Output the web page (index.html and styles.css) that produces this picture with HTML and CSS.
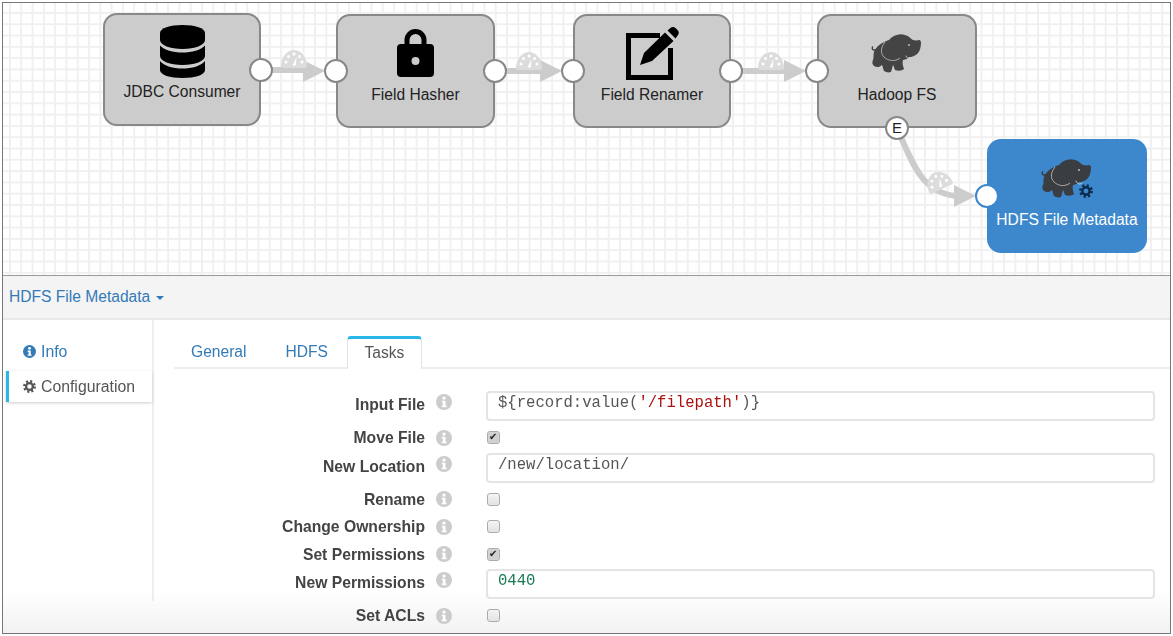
FILE: index.html
```html
<!DOCTYPE html>
<html lang="en">
<head>
<meta charset="utf-8">
<title>HDFS File Metadata</title>
<link rel="stylesheet" href="styles.css">
</head>
<body>
<svg class="defs" xmlns="http://www.w3.org/2000/svg">
  <symbol id="elephant" viewBox="13 9 50 38" overflow="visible">
    <path fill="currentColor" d="M30 15C34 10 41 8 46 10C50 11 52 14 54 15C57 16 59 15 61 15L62 17C62 24 60 29 55 31C53 32 51 32 50 32L48 34L44 35C43 38 44 41 45 44C43 46 39 46 36 45C35 43 35 41 34 40L32 47C29 48 27 47 25 46C24 44 24 42 23 40C21 42 18 43 15 41C13 39 13 37 14 35C15 33 14 30 15 27C17 21 24 17 30 15Z"/>
    <path fill="none" stroke="currentColor" stroke-width="1.400" stroke-linecap="round" d="M18 24C15 26 12.500 25 13.500 22"/>
    <path fill="none" stroke="#a8a8a8" stroke-width="1" d="M26 17C22 22 21 28 25 32C29 36 36 37 41 33"/>
    <path fill="none" stroke="#cfcfcf" stroke-width="1" stroke-linecap="round" d="M47 31C48 34 51 35 53 33"/>
    <circle cx="50" cy="20" r="1" fill="#bdbdbd"/>
  </symbol>
  <symbol id="gauge" viewBox="0 0 26 19">
    <path fill="#dcdcdc" d="M0 17C0 8 6 1 13 1S26 8 26 17C26 18 25 19 24 19H2C1 19 0 18 0 17Z"/>
    <g fill="#fff">
      <circle cx="5" cy="13" r="1.500"/><circle cx="7.500" cy="7.500" r="1.500"/><circle cx="13" cy="5" r="1.500"/><circle cx="18.500" cy="7.500" r="1.500"/><circle cx="21" cy="13" r="1.500"/>
      <path d="M15.500 8L14.800 16.500H11.500Z"/>
    </g>
  </symbol>
  <symbol id="info" viewBox="0 0 16 16">
    <circle cx="8" cy="8" r="8" fill="currentColor"/>
    <circle cx="8" cy="4.100" r="1.700" fill="#fff"/>
    <path fill="#fff" d="M5.800 6.800H9.500V11.600H10.500V13.300H5.800V11.600H6.900V8.500H5.800Z"/>
  </symbol>
  <symbol id="gear" viewBox="0 0 16 16">
    <circle cx="8" cy="8" r="4.200" fill="none" stroke="currentColor" stroke-width="2.800"/>
    <circle cx="8" cy="8" r="6.500" fill="none" stroke="currentColor" stroke-width="2.800" stroke-dasharray="2.550 2.550"/>
  </symbol>
</svg>

<div class="frame">
  <section class="canvas">
    <svg class="links" viewBox="3 3 1167 272" xmlns="http://www.w3.org/2000/svg">
      <g class="link">
        <path d="M262 70H305"/>
        <path d="M495 71H542"/>
        <path d="M731 71H786"/>
        <path d="M900 135C915 170 925 193 956 196"/>
      </g>
      <g class="arrow">
        <path d="M303 60L325 71L303 82Z"/>
        <path d="M540 60L562 71L540 82Z"/>
        <path d="M784 60L806 71L784 82Z"/>
        <path d="M954 185L976 196L954 207Z"/>
      </g>
      <use href="#gauge" x="281" y="49" width="26" height="19"/>
      <use href="#gauge" x="516" y="51" width="26" height="19"/>
      <use href="#gauge" x="758" y="51" width="26" height="19"/>
      <use href="#gauge" x="925" y="171" width="26" height="19" transform="rotate(-25 938 181)"/>
    </svg>

    <div class="node node-jdbc">
      <div class="node-icon">
        <svg width="45" height="53" viewBox="0 0 45 53" xmlns="http://www.w3.org/2000/svg">
          <path d="M0 8C0 3 10 0 22.500 0S45 3 45 8V15C45 20 35 24 22.500 24S0 20 0 15Z"/>
          <path d="M0 20.500C4 25 13 27.500 22.500 27.500S41 25 45 20.500V31C45 36 35 40 22.500 40S0 36 0 31Z"/>
          <path d="M0 36C4 41 13 43.500 22.500 43.500S41 41 45 36V45C45 50 35 53 22.500 53S0 50 0 45Z"/>
        </svg>
      </div>
      <div class="node-label">JDBC Consumer</div>
      <span class="port port-out"></span>
    </div>

    <div class="node node-hasher">
      <div class="node-icon">
        <svg width="37" height="48" viewBox="0 0 37 48" xmlns="http://www.w3.org/2000/svg">
          <path fill="none" stroke="#000" stroke-width="5" d="M10 17V11a8.500 8.500 0 0 1 17 0V17"/>
          <rect y="15" width="37" height="33" rx="4"/>
          <circle cx="18.500" cy="32" r="4" fill="#ccc"/>
        </svg>
      </div>
      <div class="node-label">Field Hasher</div>
      <span class="port port-in"></span>
      <span class="port port-out"></span>
    </div>

    <div class="node node-renamer">
      <div class="node-icon">
        <svg width="53" height="53" viewBox="0 0 53 53" xmlns="http://www.w3.org/2000/svg">
          <path fill="none" stroke="#000" stroke-width="5" d="M34 8.500H2.500V50.500H44.500V21"/>
          <path d="M14 38L18 26L39 5.500L47.500 14L26 34ZM41.500 3.500L45 .5C46.500-.3 48-.3 49.500 1L52 3.500C53 5 53 6.500 52 8L49.500 11.500Z"/>
        </svg>
      </div>
      <div class="node-label">Field Renamer</div>
      <span class="port port-in"></span>
      <span class="port port-out"></span>
    </div>

    <div class="node node-hadoop">
      <div class="node-icon">
        <svg class="elephant" width="50" height="38" xmlns="http://www.w3.org/2000/svg"><use href="#elephant" width="50" height="38"/></svg>
      </div>
      <div class="node-label">Hadoop FS</div>
      <span class="port port-in"></span>
      <span class="port port-event">E</span>
    </div>

    <div class="node node-meta">
      <div class="node-icon">
        <svg class="elephant" width="50" height="38" xmlns="http://www.w3.org/2000/svg">
          <use href="#elephant" width="50" height="38"/>
          <use class="meta-gear" href="#gear" x="37" y="25" width="14" height="14"/>
        </svg>
      </div>
      <div class="node-label">HDFS File Metadata</div>
      <span class="port port-in"></span>
    </div>
  </section>

  <header class="toolbar">
    <a class="crumb">HDFS File Metadata <span class="caret"></span></a>
  </header>

  <main class="main">
    <nav class="side">
      <a class="side-item side-link"><svg class="side-icon"><use href="#info"/></svg>Info</a>
      <a class="side-item side-active"><svg class="side-icon"><use href="#gear"/></svg>Configuration</a>
    </nav>

    <div class="content">
      <ul class="tabs">
        <li class="tab">General</li>
        <li class="tab">HDFS</li>
        <li class="tab tab-active">Tasks</li>
      </ul>

      <form class="form">
        <div class="row row-input">
          <label class="label">Input File</label>
          <svg class="hint"><use href="#info"/></svg>
          <div class="code">${record:value(<span class="str">'/filepath'</span>)}</div>
        </div>
        <div class="row row-check">
          <label class="label">Move File</label>
          <svg class="hint"><use href="#info"/></svg>
          <input class="check" type="checkbox" checked>
        </div>
        <div class="row row-input">
          <label class="label">New Location</label>
          <svg class="hint"><use href="#info"/></svg>
          <div class="code">/new/location/</div>
        </div>
        <div class="row row-check">
          <label class="label">Rename</label>
          <svg class="hint"><use href="#info"/></svg>
          <input class="check" type="checkbox">
        </div>
        <div class="row row-check">
          <label class="label">Change Ownership</label>
          <svg class="hint"><use href="#info"/></svg>
          <input class="check" type="checkbox">
        </div>
        <div class="row row-check">
          <label class="label">Set Permissions</label>
          <svg class="hint"><use href="#info"/></svg>
          <input class="check" type="checkbox" checked>
        </div>
        <div class="row row-input">
          <label class="label">New Permissions</label>
          <svg class="hint"><use href="#info"/></svg>
          <div class="code"><span class="num">0440</span></div>
        </div>
        <div class="row row-check">
          <label class="label">Set ACLs</label>
          <svg class="hint"><use href="#info"/></svg>
          <input class="check" type="checkbox">
        </div>
      </form>
    </div>
  </main>

  <div class="fade"></div>
</div>
</body>
</html>
```

FILE: styles.css
```css
* { box-sizing: border-box; }

html, body {
  margin: 0;
  padding: 0;
  background: #fff;
}

body {
  width: 1173px;
  height: 636px;
  overflow: hidden;
  font-family: "Liberation Sans", Arial, sans-serif;
  color: #333;
}

.defs { display: none; }

.frame {
  position: relative;
  display: flex;
  flex-direction: column;
  width: 1169px;
  height: 632px;
  margin: 2px 0 0 2px;
  border: 1px solid #777;
  overflow: hidden;
  filter: blur(0.35px);
}

/* Pipeline canvas */
.canvas {
  position: relative;
  flex: none;
  height: 273px;
  border-bottom: 1px solid #999;
  background-color: #fff;
  background-image:
    linear-gradient(to right, #f0f0f0 1.5px, transparent 1.5px),
    linear-gradient(to bottom, #f0f0f0 1.5px, transparent 1.5px);
  background-size: 11.3px 11.3px;
  background-position: 6px 9px;
}

.links {
  position: absolute;
  left: 0;
  top: 0;
  width: 1167px;
  height: 272px;
}

.link path {
  fill: none;
  stroke: #ccc;
  stroke-width: 6;
}

.arrow path { fill: #ccc; }

.node {
  position: absolute;
  display: flex;
  flex-direction: column;
  align-items: center;
  height: 114px;
  border: 2px solid #888;
  border-radius: 14px;
  background: #ccc;
  color: #222;
}

.node-jdbc { left: 100px; top: 10px; width: 158px; height: 113px; }
.node-hasher { left: 333px; top: 11px; width: 159px; }
.node-renamer { left: 570px; top: 11px; width: 158px; }
.node-hadoop { left: 814px; top: 11px; width: 160px; }

.node-meta {
  left: 984px;
  top: 136px;
  width: 160px;
  border-color: #3d88cc;
  background: #3d88cc;
  color: #fff;
}

.node-icon {
  display: flex;
  align-items: center;
  justify-content: center;
  height: 70px;
  padding-top: 4px;
}

.node-jdbc .node-icon { height: 68px; }

.node-icon svg { display: block; overflow: visible; }

.elephant { color: #444; }
.node-meta .elephant { color: #3a3d42; }
.meta-gear { color: #0c2c4c; }

.node-label {
  font-size: 15.6px;
  line-height: 18px;
  white-space: nowrap;
}

.port {
  position: absolute;
  top: 43px;
  width: 24px;
  height: 24px;
  border: 2px solid #888;
  border-radius: 50%;
  background: #fff;
}

.port-in { left: -14px; }
.port-out { right: -14px; }
.node-meta .port-in { border-color: #3d88cc; }

.port-event {
  top: auto;
  bottom: -14px;
  left: 50%;
  margin-left: -12px;
  font-size: 15px;
  line-height: 20px;
  text-align: center;
  color: #222;
}

/* Toolbar */
.toolbar {
  flex: none;
  display: flex;
  align-items: center;
  height: 44px;
  padding: 0 6px;
  background: #f4f4f4;
  border-bottom: 2px solid #e9e9e9;
}

.crumb {
  font-size: 15.6px;
  color: #337ab7;
}

.caret {
  display: inline-block;
  width: 0;
  height: 0;
  margin-left: 1px;
  vertical-align: middle;
  border-top: 4px solid #337ab7;
  border-left: 4px solid transparent;
  border-right: 4px solid transparent;
}

/* Main */
.main {
  position: relative;
  z-index: 1;
  flex: 1;
  display: flex;
  align-items: flex-start;
  min-height: 0;
}

.side {
  flex: none;
  display: flex;
  flex-direction: column;
  width: 151px;
  height: 281px;
  padding-top: 16px;
  border-right: 2px solid #eee;
}

.side-item {
  display: flex;
  align-items: center;
  gap: 5px;
  height: 31px;
  font-size: 15.8px;
}

.side-icon {
  flex: none;
  width: 13px;
  height: 13px;
}

.side-link {
  padding-left: 20px;
  color: #337ab7;
}

.side-active {
  margin: 4px 0 0 3px;
  padding-left: 14px;
  border-left: 3px solid #29b6e8;
  background: #fff;
  box-shadow: 0 1px 3px #ccc;
  color: #555;
}

.content {
  flex: 1;
  min-width: 0;
}

.tabs {
  display: flex;
  height: 49px;
  margin: 0 0 0 20px;
  padding: 16px 0 0 0;
  list-style: none;
  border-bottom: 2px solid #eee;
}

.tab {
  height: 33px;
  padding: 7px 17px 0 17px;
  margin-right: 2px;
  font-size: 15.6px;
  line-height: 18px;
  color: #337ab7;
}

.tab:first-child {
  padding-right: 18px;
  margin-right: 4px;
}

.tab-active {
  padding: 5px 0 0;
  width: 75px;
  text-align: center;
  border: 1px solid #e2e2e2;
  border-top: 3px solid #29b6e8;
  border-bottom: 0;
  border-radius: 4px 4px 0 0;
  background: #fff;
  color: #555;
}

.form {
  display: flex;
  flex-direction: column;
  margin-top: 22px;
  padding-right: 15px;
}

.row {
  display: grid;
  grid-template-columns: 271px 16px 1fr;
  column-gap: 11px;
}

.label {
  padding-top: 1px;
  font-size: 15.7px;
  font-weight: 700;
  line-height: 20px;
  text-align: right;
  color: #444;
  white-space: nowrap;
}

.hint {
  width: 16px;
  height: 16px;
  color: #ccc;
}

.row-input {
  height: 30px;
  align-items: start;
}

.row-input .label,
.row-input .hint { margin-top: 3px; }

.row-check {
  height: 27.5px;
  align-items: center;
}

.row-input + .row-check { margin-top: 3px; }
.row-check + .row-input { margin-top: 1px; }

.code {
  height: 30px;
  margin-left: 23px;
  padding: 1px 10px 0;
  border: 2px solid #e4e4e4;
  border-radius: 4px;
  font-family: "Liberation Mono", "Courier New", monospace;
  font-size: 15.6px;
  line-height: 18px;
  color: #555;
  white-space: pre;
}

.str { color: #a11; }
.num { color: #1a7a55; }

.check {
  appearance: none;
  position: relative;
  display: block;
  width: 13px;
  height: 13px;
  margin: 0 0 0 24px;
  border: 1px solid #aaa;
  border-radius: 3px;
  background: linear-gradient(#f4f4f4, #e2e2e2);
  box-shadow: inset 0 0 1px #fff;
}

.check:checked { background: #d0d0d0; }

.check:checked::after {
  content: "\2714";
  position: absolute;
  left: 1px;
  top: -2px;
  font-family: "DejaVu Sans", sans-serif;
  font-size: 10px;
  line-height: 14px;
  color: #222;
}

.fade {
  position: absolute;
  z-index: 0;
  left: 0;
  right: 0;
  bottom: 0;
  height: 44px;
  background: linear-gradient(rgba(242, 242, 242, 0), #f2f2f2);
  pointer-events: none;
}
```
